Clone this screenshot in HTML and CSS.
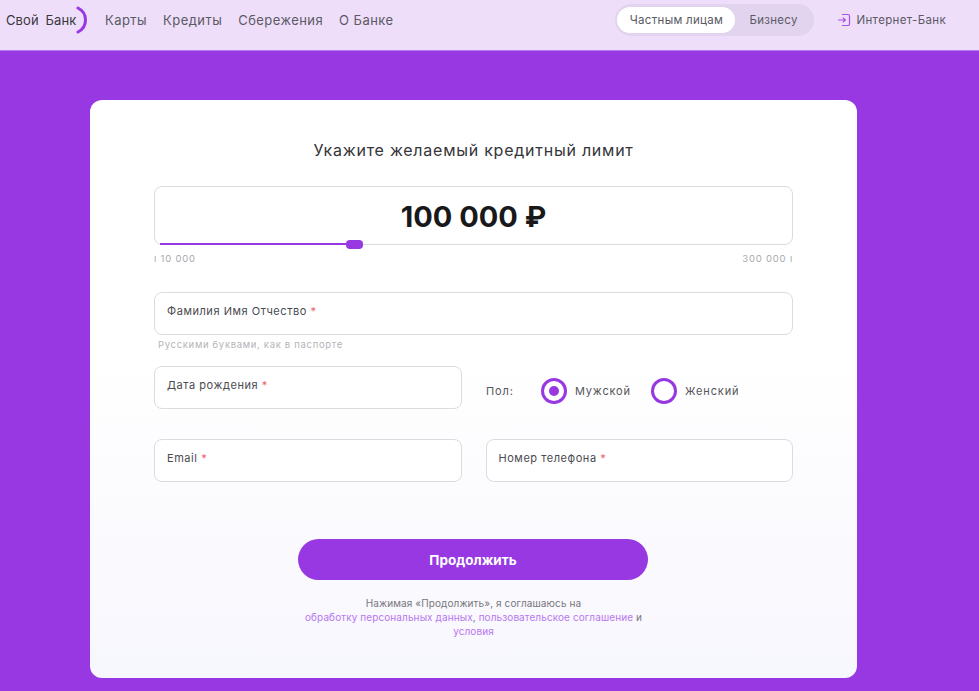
FILE: index.html
```html
<!DOCTYPE html>
<html lang="ru">

<head>
    <meta charset="UTF-8">
    <meta name="viewport" content="width=device-width, initial-scale=1.0">
    <title>Свой Банк</title>
    <link rel="stylesheet" href="styles.css">
</head>

<body>
    <header class="topbar">
        <div class="logo">
            <span class="logo-text">Свой Банк</span>
            <svg class="logo-arc" width="12" height="28" viewBox="0 0 12 28">
                <path d="M2 2 C12 7 12 21 2 26" fill="none" stroke="#9738e2" stroke-width="3" stroke-linecap="round" />
            </svg>
        </div>
        <nav class="menu">
            <a href="#">Карты</a>
            <a href="#">Кредиты</a>
            <a href="#">Сбережения</a>
            <a href="#">О Банке</a>
        </nav>
        <div class="switch">
            <span class="switch-item active">Частным лицам</span>
            <span class="switch-item">Бизнесу</span>
        </div>
        <a class="login" href="#">
            <svg width="14" height="14" viewBox="0 0 14 14" fill="none" stroke="#a94fe8" stroke-width="1.2">
                <path d="M5 1.5h6a1.5 1.5 0 0 1 1.5 1.5v8a1.5 1.5 0 0 1-1.5 1.5H5" />
                <path d="M1 7h7M5.8 4.6 8.4 7 5.8 9.4" />
            </svg>
            Интернет-Банк
        </a>
    </header>

    <main class="content">
        <form class="card">
            <h2 class="card-title">Укажите желаемый кредитный лимит</h2>

            <div class="amount">
                <div class="amount-value">100 000 ₽</div>
                <div class="slider-line"></div>
                <div class="slider-thumb"></div>
            </div>
            <div class="limits">
                <span>ı 10 000</span>
                <span>300 000 ı</span>
            </div>

            <div class="field field-wide">Фамилия Имя Отчество <i>*</i></div>
            <div class="hint">Русскими буквами, как в паспорте</div>

            <div class="row row-birth">
                <div class="field">Дата рождения <i>*</i></div>
                <div class="gender">
                    <span class="gender-label">Пол:</span>
                    <span class="radio checked"></span>
                    <span class="radio-label">Мужской</span>
                    <span class="radio"></span>
                    <span class="radio-label">Женский</span>
                </div>
            </div>

            <div class="row row-contacts">
                <div class="field">Email <i>*</i></div>
                <div class="field">Номер телефона <i>*</i></div>
            </div>

            <button class="submit" type="button">Продолжить</button>

            <p class="terms">
                Нажимая «Продолжить», я соглашаюсь на<br>
                <a href="#">обработку персональных данных</a>, <a href="#">пользовательское соглашение</a> и<br>
                <a href="#">условия</a>
            </p>
        </form>
    </main>
</body>

</html>
```

FILE: styles.css
```css
* {
    box-sizing: border-box;
}

body {
    margin: 0;
    height: 691px;
    overflow: hidden;
    background: #9738e2;
    font-family: "Inter", "Noto Sans", sans-serif;
    color: #4a4a4f;
}

a {
    color: inherit;
    text-decoration: none;
}

.topbar {
    display: flex;
    align-items: center;
    height: 51px;
    padding: 0 33px 10px 6px;
    background: #eedefa;
    border-bottom: 1px solid #b77aec;
}

.logo {
    display: flex;
    align-items: center;
    width: 99px;
}

.logo-text {
    font-size: 13px;
    font-weight: 400;
    letter-spacing: 0.1px;
    word-spacing: 3px;
    color: #38383c;
}

.logo-arc {
    margin-left: 0;
}

.menu {
    display: flex;
    gap: 16px;
    font-size: 13px;
    font-weight: 400;
    letter-spacing: 0.45px;
    color: #5b5a63;
}

.switch {
    display: flex;
    align-items: center;
    margin-left: auto;
    height: 32px;
    width: 199px;
    padding: 3px 2px;
    border-radius: 16px;
    background: #e2d4ee;
    font-size: 11.5px;
    font-weight: 400;
    letter-spacing: 0.3px;
    color: #5b5a63;
}

.switch-item {
    padding: 0 0 0 14px;
}

.switch-item.active {
    display: flex;
    align-items: center;
    justify-content: center;
    width: 118px;
    height: 26px;
    border-radius: 13px;
    background: #fff;
    padding: 0;
}

.login {
    display: flex;
    align-items: center;
    gap: 5px;
    margin-left: 23px;
    font-size: 11.5px;
    font-weight: 400;
    letter-spacing: 0.35px;
    color: #5b5a63;
}

.content {
    padding: 49px 122px 0 90px;
}

.card {
    height: 578px;
    padding: 40px 64px 0;
    border-radius: 12px;
    background: linear-gradient(#fff 0%, #fff 45%, #f7f7fe 100%);
}

.card-title {
    margin: 0 0 26px;
    font-size: 16px;
    line-height: 20px;
    font-weight: 400;
    letter-spacing: 0.75px;
    text-align: center;
    color: #35353a;
}

.amount {
    position: relative;
    height: 59px;
    border: 1px solid #dcdce0;
    border-radius: 8px;
    padding-top: 12px;
    background: #fff;
}

.amount-value {
    font-size: 29px;
    line-height: 36px;
    font-weight: 700;
    text-align: center;
    color: #19191c;
}

.slider-line {
    position: absolute;
    left: 5px;
    bottom: -1px;
    width: 192px;
    height: 2px;
    background: #9738e2;
}

.slider-thumb {
    position: absolute;
    left: 191px;
    bottom: -5px;
    width: 17px;
    height: 9px;
    border-radius: 4px;
    background: #9738e2;
}

.limits {
    display: flex;
    justify-content: space-between;
    margin-top: 7px;
    margin-bottom: 27px;
    font-size: 9.5px;
    line-height: 13px;
    letter-spacing: 0.8px;
    color: #a9a9ae;
}

.field {
    height: 43px;
    padding: 11px 12px 0;
    border: 1px solid #dcdce0;
    border-radius: 8px;
    background: #fff;
    font-size: 11px;
    line-height: 14px;
    font-weight: 400;
    letter-spacing: 0.55px;
    color: #4a4a4f;
}

.field i {
    font-style: normal;
    color: #f0626a;
}

.hint {
    margin: 3px 0 0 4px;
    font-size: 9.5px;
    line-height: 13px;
    letter-spacing: 0.68px;
    color: #b4b4b9;
}

.row {
    display: grid;
    grid-template-columns: 308px 1fr;
    column-gap: 24px;
}

.row-birth {
    margin-top: 15px;
    grid-template-rows: 43px;
}

.row-contacts {
    grid-template-columns: 1fr 1fr;
    margin-top: 30px;
}

.gender {
    display: flex;
    align-items: center;
    height: 50px;
    font-size: 11px;
    font-weight: 400;
    letter-spacing: 0.85px;
    color: #55555a;
}

.gender-label {
    width: 55px;
}

.radio {
    width: 26px;
    height: 26px;
    padding: 5px;
    border: 3px solid #9738e2;
    border-radius: 50%;
    background: #fff;
}

.radio.checked::before {
    content: "";
    display: block;
    width: 10px;
    height: 10px;
    border-radius: 50%;
    background: #9738e2;
}

.radio-label {
    margin-left: 8px;
    width: 76px;
}

.submit {
    display: block;
    width: 350px;
    height: 41px;
    margin: 57px 0 0 144px;
    border: 0;
    border-radius: 21px;
    background: #9738e2;
    font-family: inherit;
    font-size: 13.5px;
    font-weight: 700;
    color: #fff;
}

.terms {
    margin: 16px auto 0;
    width: 350px;
    font-size: 10px;
    line-height: 14px;
    letter-spacing: 0.1px;
    text-align: center;
    color: #77777c;
}

.terms a {
    color: #b877ee;
}
```
